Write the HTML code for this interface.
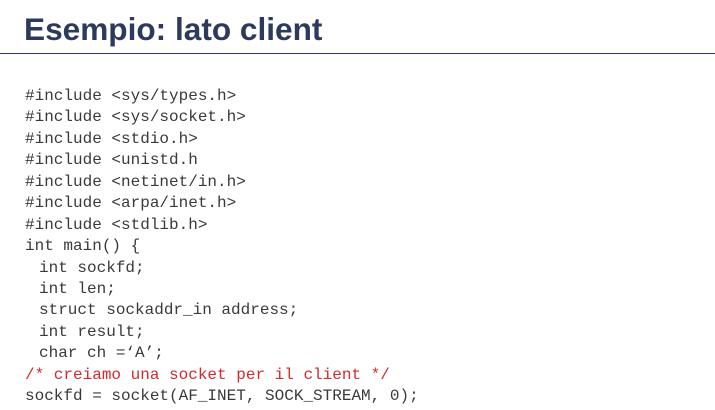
<!DOCTYPE html>
<html><head><meta charset="utf-8"><style>
body{margin:0;width:715px;height:410px;background:#fff;overflow:hidden;position:relative}
h1{position:absolute;left:24px;top:11px;margin:0;font:bold 31.6px "Liberation Sans",sans-serif;color:#2c3a5c}
.rule{position:absolute;left:0;top:53px;width:715px;height:1px;background:#2c3a5c}
pre{position:absolute;left:25px;top:86px;margin:0;font:16px/21.43px "Liberation Mono",monospace;color:#3a3a3a}
.i{padding-left:14px;display:inline-block}
.r{color:#d42a2a}
</style></head><body>
<h1>Esempio: lato client</h1>
<div class="rule"></div>
<pre>#include &lt;sys/types.h&gt;
#include &lt;sys/socket.h&gt;
#include &lt;stdio.h&gt;
#include &lt;unistd.h
#include &lt;netinet/in.h&gt;
#include &lt;arpa/inet.h&gt;
#include &lt;stdlib.h&gt;
int main() {
<span class="i">int sockfd;</span>
<span class="i">int len;</span>
<span class="i">struct sockaddr_in address;</span>
<span class="i">int result;</span>
<span class="i">char ch =‘A’;</span>
<span class="r">/* creiamo una socket per il client */</span>
sockfd = socket(AF_INET, SOCK_STREAM, 0);</pre>
</body></html>
